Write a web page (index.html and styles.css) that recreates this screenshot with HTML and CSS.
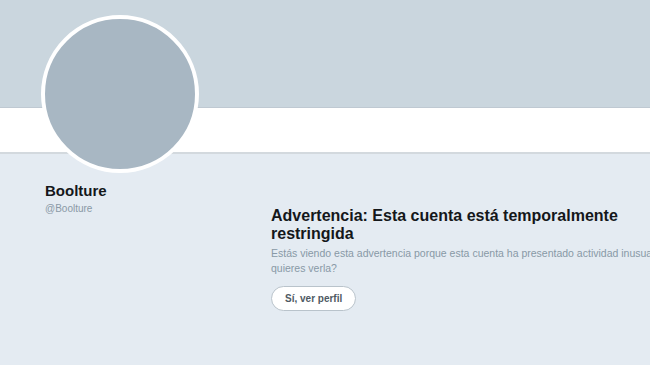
FILE: index.html
```html
<!DOCTYPE html>
<html lang="es">
<head>
    <meta charset="UTF-8">
    <meta name="viewport" content="width=device-width, initial-scale=1.0">
    <title>Boolture</title>
    <link rel="stylesheet" href="styles.css">
</head>
<body>
    <div class="top">
        <div class="banner"></div>
        <div class="navbar"></div>
        <div class="avatar"></div>
    </div>

    <div class="main">
        <div class="profile">
            <div class="name">Boolture</div>
            <div class="handle">@Boolture</div>
        </div>
        <div class="warning">
            <h2>Advertencia: Esta cuenta está temporalmente restringida</h2>
            <p>Estás viendo esta advertencia porque esta cuenta ha presentado actividad inusual. ¿Aún quieres verla?</p>
            <button type="button">Sí, ver perfil</button>
        </div>
    </div>
</body>
</html>
```

FILE: styles.css
```css
html, body {
    margin: 0;
    height: 100%;
}
body {
    font-family: "Liberation Sans", Arial, sans-serif;
    background-color: #e4ebf2;
    color: #14171a;
    overflow: hidden;
}
.top {
    position: relative;
}
.banner {
    height: 107px;
    background-color: #cad6de;
    border-bottom: 1px solid #bfc9d2;
}
.navbar {
    height: 44px;
    background-color: #ffffff;
    border-bottom: 2px solid #d3d9de;
}
.avatar {
    position: absolute;
    left: 41px;
    top: 15px;
    width: 150px;
    height: 150px;
    border: 4px solid #ffffff;
    border-radius: 50%;
    background-color: #a8b7c3;
}
.main {
    display: flex;
    padding-top: 28px;
}
.profile {
    width: 226px;
    padding-left: 45px;
    flex-shrink: 0;
}
.name {
    font-size: 15px;
    font-weight: bold;
    line-height: 18px;
}
.handle {
    font-size: 10px;
    color: #8a99a6;
    margin-top: 3px;
}
.warning {
    width: 440px;
    flex-shrink: 0;
    padding-top: 25px;
}
.warning h2 {
    font-size: 16px;
    line-height: 18px;
    max-width: 370px;
    margin: 0 0 3px;
}
.warning p {
    font-size: 10.5px;
    line-height: 15px;
    color: #8899a6;
    margin: 0 0 10px;
}
.warning button {
    font-family: inherit;
    font-size: 10px;
    font-weight: bold;
    color: #4f5a63;
    background-color: #ffffff;
    border: 1px solid #b9c3cb;
    border-radius: 13px;
    height: 25px;
    padding: 0 13px;
}
```
